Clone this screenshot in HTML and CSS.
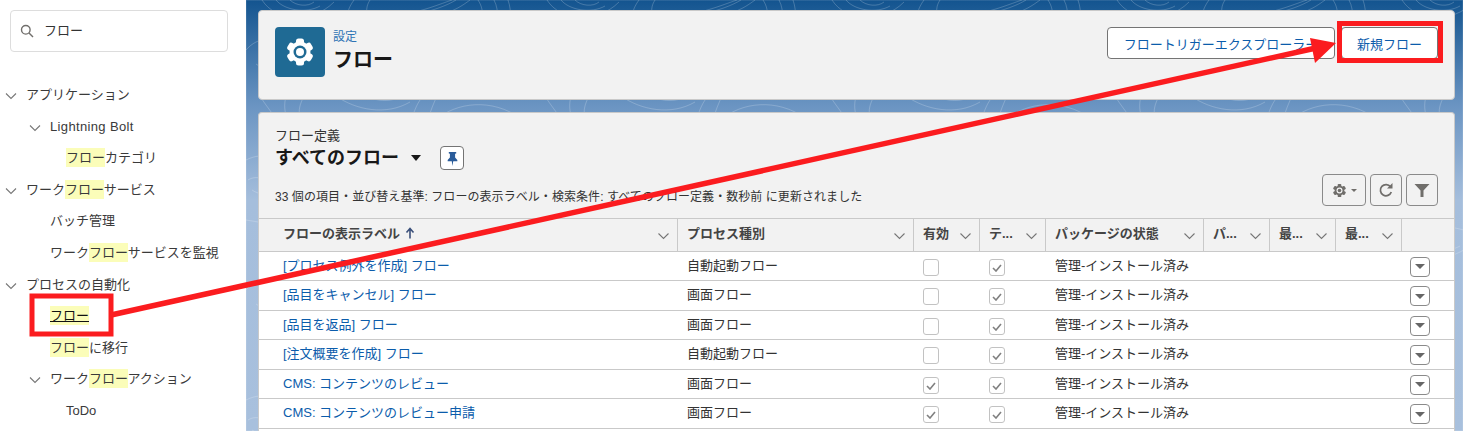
FILE: index.html
```html
<!DOCTYPE html>
<html lang="ja">
<head>
<meta charset="utf-8">
<title>フロー</title>
<link rel="stylesheet" href="styles.css">
</head>
<body>
<div class="page">
  <aside class="sidebar">
    <div class="search">
      <svg class="search-icon" viewBox="0 0 14 14"><circle cx="5.8" cy="5.8" r="4.3"/><path d="M9 9l4 4"/></svg>
      <span class="search-text">フロー</span>
    </div>
    <nav class="tree">
      <div class="node l0"><svg class="chev" viewBox="0 0 12 8"><path d="M1 1.5l5 5 5-5"/></svg>アプリケーション</div>
      <div class="node l1 latin"><svg class="chev" viewBox="0 0 12 8"><path d="M1 1.5l5 5 5-5"/></svg>Lightning Bolt</div>
      <div class="node l2"><mark>フロー</mark>カテゴリ</div>
      <div class="node l0"><svg class="chev" viewBox="0 0 12 8"><path d="M1 1.5l5 5 5-5"/></svg>ワーク<mark>フロー</mark>サービス</div>
      <div class="node l1 leaf">バッチ管理</div>
      <div class="node l1 leaf">ワーク<mark>フロー</mark>サービスを監視</div>
      <div class="node l0"><svg class="chev" viewBox="0 0 12 8"><path d="M1 1.5l5 5 5-5"/></svg>プロセスの自動化</div>
      <div class="node l1 leaf"><mark class="current">フロー</mark></div>
      <div class="node l1 leaf"><mark>フロー</mark>に移行</div>
      <div class="node l1"><svg class="chev" viewBox="0 0 12 8"><path d="M1 1.5l5 5 5-5"/></svg>ワーク<mark>フロー</mark>アクション</div>
      <div class="node l2">ToDo</div>
    </nav>
  </aside>
  <main class="content">
    <svg class="topo">
      <defs>
        <pattern id="contours" width="285" height="240" patternUnits="userSpaceOnUse">
          <path d="M30 0c8 10 30 14 44 6M44 0c6 6 18 7 24 2M16 0c14 22 50 24 72 2M108 0c-6 8-8 16-6 22M124 0c-4 6-4 12-2 18M160 14c20-4 34-10 46-14M172 14c16-4 28-8 38-14M196 14c12-3 20-8 28-14M232 0c4 6 5 12 4 18M248 0c3 6 4 12 3 18M262 0c2 6 3 12 2 18"/>
          <path d="M14 96c6 10 12 16 16 24M40 96c-2 8-2 16 2 24M58 96c-4 8-6 14-4 22M90 96c20 14 50 20 74 6M120 96c12 6 26 6 36 0M165 120c4-10 6-18 14-26M182 120c2-8 6-18 10-26M190 120c20-18 56-22 84-2M220 120c10-6 26-8 36-4"/>
          <path d="M0 50c12-14 30-14 34 0s-14 22-24 14M0 160c20-10 34 0 36 14s-16 26-30 16M2 180c10-6 20 0 20 10M250 40c12-8 28-4 30 8s-8 20-20 16M240 170c14-14 38-12 42 6s-16 24-30 16M262 176c6-2 10 2 10 6M0 220c30 6 60 2 90 14M100 60c20 10 40 8 60 0M90 190c24-10 60-10 80 4"/>
        </pattern>
      </defs>
      <rect width="100%" height="100%" fill="url(#contours)"/>
    </svg>
    <section class="panel head-panel">
      <div class="app-icon">
        <svg viewBox="0 0 50 50">
          <g class="gear-teeth">
            <rect x="21" y="11.500" width="8" height="27" rx="2.500"/>
            <rect x="21" y="11.500" width="8" height="27" rx="2.500" transform="rotate(60 25 25)"/>
            <rect x="21" y="11.500" width="8" height="27" rx="2.500" transform="rotate(120 25 25)"/>
          </g>
          <circle class="gear-body" cx="25" cy="25" r="10.500"/>
          <circle class="gear-hole" cx="25" cy="25" r="6.500"/>
          <circle class="gear-body" cx="25" cy="25" r="4"/>
        </svg>
      </div>
      <div class="head-text">
        <a class="crumb">設定</a>
        <h1>フロー</h1>
      </div>
      <div class="head-actions">
        <button class="btn wide">フロートリガーエクスプローラー</button>
        <button class="btn">新規フロー</button>
      </div>
    </section>
    <section class="panel list-panel">
      <div class="list-top">
        <div class="list-title">
          <div class="eyebrow">フロー定義</div>
          <div class="view-row">
            <h2>すべてのフロー</h2>
            <span class="caret"></span>
            <button class="pin">
              <svg viewBox="0 0 14 16"><path d="M3 1h8v1.500L9.800 3v4l2.400 2.500V11H1.800V9.500L4.200 7V3L3 2.500zM6.200 11h1.600L7 16z"/></svg>
            </button>
          </div>
          <div class="info">33 個の項目・並び替え基準: フローの表示ラベル・検索条件: すべてのフロー定義・数秒前 に更新されました</div>
        </div>
        <div class="tools">
          <button class="tool gear-tool">
            <svg class="tool-gear" viewBox="0 0 50 50">
              <rect x="19" y="3" width="12" height="44" rx="3"/>
              <rect x="19" y="3" width="12" height="44" rx="3" transform="rotate(60 25 25)"/>
              <rect x="19" y="3" width="12" height="44" rx="3" transform="rotate(120 25 25)"/>
              <circle cx="25" cy="25" r="16"/>
              <circle class="hole" cx="25" cy="25" r="10"/>
              <circle cx="25" cy="25" r="6"/>
            </svg>
            <span class="mini-caret"></span>
          </button>
          <button class="tool">
            <svg class="tool-icon" viewBox="0 0 16 16"><path class="ring" d="M12.500 4.800A5.600 5.600 0 1 0 13.300 10"/><path class="fill" d="M9 6.500h5.500V1z"/></svg>
          </button>
          <button class="tool">
            <svg class="tool-icon" viewBox="0 0 16 16"><path class="fill" d="M0.500 2h15L9.500 8.500V15h-3V8.500z"/></svg>
          </button>
        </div>
      </div>
      <div class="table">
        <div class="row header">
          <div class="cell first">フローの表示ラベル<svg class="sort" viewBox="0 0 10 12"><path d="M5 11.500V2.500M1.500 5.500L5 1.500l3.500 4"/></svg><svg class="chev" viewBox="0 0 12 8"><path d="M1 1.500l5 5 5-5"/></svg></div>
          <div class="cell">プロセス種別<svg class="chev" viewBox="0 0 12 8"><path d="M1 1.500l5 5 5-5"/></svg></div>
          <div class="cell">有効<svg class="chev" viewBox="0 0 12 8"><path d="M1 1.500l5 5 5-5"/></svg></div>
          <div class="cell">テ...<svg class="chev" viewBox="0 0 12 8"><path d="M1 1.500l5 5 5-5"/></svg></div>
          <div class="cell">パッケージの状態<svg class="chev" viewBox="0 0 12 8"><path d="M1 1.500l5 5 5-5"/></svg></div>
          <div class="cell">パ...<svg class="chev" viewBox="0 0 12 8"><path d="M1 1.500l5 5 5-5"/></svg></div>
          <div class="cell">最...<svg class="chev" viewBox="0 0 12 8"><path d="M1 1.500l5 5 5-5"/></svg></div>
          <div class="cell">最...<svg class="chev" viewBox="0 0 12 8"><path d="M1 1.500l5 5 5-5"/></svg></div>
          <div class="cell last"></div>
        </div>
        <div class="row">
          <div class="cell first"><a>[プロセス例外を作成] フロー</a></div><div class="cell">自動起動フロー</div>
          <div class="cell"><span class="check"></span></div>
          <div class="cell"><span class="check on"><svg viewBox="0 0 10 8"><path d="M1 4l3 3 5-6"/></svg></span></div>
          <div class="cell">管理-インストール済み</div><div class="cell"></div><div class="cell"></div><div class="cell"></div>
          <div class="cell last"><button class="row-btn"><span></span></button></div>
        </div>
        <div class="row">
          <div class="cell first"><a>[品目をキャンセル] フロー</a></div><div class="cell">画面フロー</div>
          <div class="cell"><span class="check"></span></div>
          <div class="cell"><span class="check on"><svg viewBox="0 0 10 8"><path d="M1 4l3 3 5-6"/></svg></span></div>
          <div class="cell">管理-インストール済み</div><div class="cell"></div><div class="cell"></div><div class="cell"></div>
          <div class="cell last"><button class="row-btn"><span></span></button></div>
        </div>
        <div class="row">
          <div class="cell first"><a>[品目を返品] フロー</a></div><div class="cell">画面フロー</div>
          <div class="cell"><span class="check"></span></div>
          <div class="cell"><span class="check on"><svg viewBox="0 0 10 8"><path d="M1 4l3 3 5-6"/></svg></span></div>
          <div class="cell">管理-インストール済み</div><div class="cell"></div><div class="cell"></div><div class="cell"></div>
          <div class="cell last"><button class="row-btn"><span></span></button></div>
        </div>
        <div class="row">
          <div class="cell first"><a>[注文概要を作成] フロー</a></div><div class="cell">自動起動フロー</div>
          <div class="cell"><span class="check"></span></div>
          <div class="cell"><span class="check on"><svg viewBox="0 0 10 8"><path d="M1 4l3 3 5-6"/></svg></span></div>
          <div class="cell">管理-インストール済み</div><div class="cell"></div><div class="cell"></div><div class="cell"></div>
          <div class="cell last"><button class="row-btn"><span></span></button></div>
        </div>
        <div class="row">
          <div class="cell first"><a>CMS: コンテンツのレビュー</a></div><div class="cell">画面フロー</div>
          <div class="cell"><span class="check on"><svg viewBox="0 0 10 8"><path d="M1 4l3 3 5-6"/></svg></span></div>
          <div class="cell"><span class="check on"><svg viewBox="0 0 10 8"><path d="M1 4l3 3 5-6"/></svg></span></div>
          <div class="cell">管理-インストール済み</div><div class="cell"></div><div class="cell"></div><div class="cell"></div>
          <div class="cell last"><button class="row-btn"><span></span></button></div>
        </div>
        <div class="row">
          <div class="cell first"><a>CMS: コンテンツのレビュー申請</a></div><div class="cell">画面フロー</div>
          <div class="cell"><span class="check on"><svg viewBox="0 0 10 8"><path d="M1 4l3 3 5-6"/></svg></span></div>
          <div class="cell"><span class="check on"><svg viewBox="0 0 10 8"><path d="M1 4l3 3 5-6"/></svg></span></div>
          <div class="cell">管理-インストール済み</div><div class="cell"></div><div class="cell"></div><div class="cell"></div>
          <div class="cell last"><button class="row-btn"><span></span></button></div>
        </div>
        <div class="row"></div>
      </div>
    </section>
  </main>
  <svg class="annotation" viewBox="0 0 1463 431">
    <rect x="32" y="296" width="79" height="38"/>
    <rect x="1339.500" y="23.500" width="101" height="37"/>
    <path class="shaft" d="M111 315L1316 48"/>
    <path class="head" d="M1336 43L1310 38L1315 63z"/>
  </svg>
</div>
</body>
</html>
```
FILE: styles.css
```css
* { box-sizing: border-box; }
html, body { margin: 0; padding: 0; height: 100%; }
body {
  font-family: "Liberation Sans", "Noto Sans CJK JP", sans-serif;
  font-size: 13px;
  color: #181818;
  overflow: hidden;
}
.page {
  position: relative;
  display: flex;
  width: 1463px;
  height: 431px;
  overflow: hidden;
}
.sidebar {
  flex: 0 0 246px;
  background: #fff;
  padding: 10px 18px 0 10px;
}
.search {
  display: flex;
  align-items: center;
  gap: 10px;
  height: 42px;
  padding-left: 9px;
  border: 1px solid #dddddd;
  border-radius: 4px;
  font-size: 13px;
}
.search-icon { width: 14px; height: 14px; fill: none; stroke: #706e6b; stroke-width: 1.4; }
.search-text { margin-top: -4px; color: #333; }
.tree { margin: 27px -18px 0 -10px; }
.node {
  position: relative;
  height: 31.6px;
  line-height: 31.6px;
  white-space: nowrap;
  color: #3a3a3a;
}
.node .chev { position: absolute; top: 13px; width: 12px; height: 8px; }
.l0 { padding-left: 26px; }
.l0 .chev { left: 5px; }
.l1 { padding-left: 50px; }
.l1 .chev { left: 29px; }
.l2 { padding-left: 66px; }
.latin { letter-spacing: .35px; }
mark { background: #fbfdb9; color: inherit; padding: 2px 0; }
.current { text-decoration: underline; color: #111; }
.chev { fill: none; stroke: #777; stroke-width: 1.1; }

.content {
  position: relative;
  flex: 1;
  min-width: 0;
  padding: 10px 8px 0 12px;
  background: linear-gradient(180deg, #13548f 0, #6a94c2 105px, #a5bedc 200px, #a8c0dd 431px);
}
.topo { position: absolute; inset: 0; width: 100%; height: 100%; fill: none; stroke: rgba(255,255,255,.2); stroke-width: 1; }
.panel {
  position: relative;
  background: #f2f2f2;
  border: 1px solid #c9c9c9;
  border-radius: 4px;
}
.head-panel {
  display: flex;
  align-items: flex-start;
  height: 90px;
  padding: 16px 16px 0;
  margin-bottom: 12px;
}
.app-icon { width: 50px; height: 50px; border-radius: 4px; background: #1f6a94; flex: none; }
.app-icon svg { display: block; width: 50px; height: 50px; }
.gear-teeth, .gear-body { fill: #fff; }
.gear-hole { fill: #1f6a94; }
.head-text { margin-left: 8px; padding-top: 2px; flex: 1; }
.crumb { display: block; font-size: 12px; line-height: 16px; color: #2e74b5; }
h1 { margin: 2px 0 0; font-size: 20px; line-height: 26px; font-weight: 700; color: #181818; }
.head-actions { display: flex; gap: 6px; }
.btn {
  height: 32px;
  width: 97px;
  padding: 0;
  border: 1px solid #747474;
  border-radius: 4px;
  background: #fff;
  color: #0b5cab;
  font: inherit;
  font-size: 13px;
}
.btn.wide { width: 228px; }
.list-panel { height: 330px; padding-top: 14px; border-bottom: 0; overflow: hidden; }
.list-top { display: flex; justify-content: space-between; height: 91px; padding: 0 16px; }
.eyebrow { line-height: 18px; color: #333; }
.view-row { display: flex; align-items: center; height: 24px; margin-top: 1px; }
h2 { margin: 0; font-size: 18px; line-height: 24px; font-weight: 700; }
.caret { margin: 0 19px 0 12px; border: 5px solid transparent; border-top: 6px solid #181818; border-bottom: 0; }
.pin { width: 24px; height: 24px; padding: 0; border: 1px solid #747474; border-radius: 4px; background: #fff; }
.pin svg { display: block; width: 13px; height: 15px; margin: auto; fill: #2a5c9a; }
.info { margin-top: 18px; font-size: 12px; line-height: 18px; color: #333; white-space: nowrap; letter-spacing: .06px; }
.tools { display: flex; gap: 4px; margin-top: 47px; height: 32px; }
.tool { width: 32px; height: 32px; padding: 0; border: 1px solid #8a8a8a; border-radius: 4px; background: #f2f2f2; display: flex; align-items: center; justify-content: center; }
.gear-tool { width: 44px; gap: 4px; }
.tool-gear { width: 15px; height: 15px; fill: #706e6b; }
.tool-gear .hole { fill: #f2f2f2; }
.mini-caret { border: 3px solid transparent; border-top: 3px solid #706e6b; border-bottom: 0; }
.tool-icon { width: 16px; height: 16px; }
.tool-icon .ring { fill: none; stroke: #706e6b; stroke-width: 1.7; }
.tool-icon .fill { fill: #706e6b; }

.table { display: block; }
.row {
  display: grid;
  grid-template-columns: 419px 236px 66px 66px 158px 66px 66px 66px 1fr;
  height: 29.5px;
  background: #fff;
  border-bottom: 1px solid #c9c9c9;
  line-height: 28.5px;
  white-space: nowrap;
  color: #333;
}
.row:last-child { height: 10px; border-bottom: 0; }
.row.header {
  height: 33.5px;
  background: #f2f2f2;
  border-top: 1px solid #c9c9c9;
  font-weight: 700;
  color: #444;
  line-height: 29px;
}
.cell { position: relative; padding-left: 9px; min-width: 0; overflow: hidden; }
.cell.first { padding-left: 24px; }
.cell.last { padding-left: 8px; }
.header .cell { border-right: 1px solid #c9c9c9; }
.header .cell.last { border-right: 0; }
.header .chev { position: absolute; right: 7px; top: 13px; width: 13px; height: 8px; }
.sort { width: 10px; height: 12px; margin-left: 5px; vertical-align: -1px; fill: none; stroke: #3a4f7a; stroke-width: 1.6; }
.row a { color: #0b5cab; }
.check {
  display: block;
  width: 16px;
  height: 17px;
  margin-top: 7px;
  border: 1px solid #c2c2c2;
  border-radius: 3px;
  background: #fff;
}
.check svg { display: block; width: 10px; height: 8px; margin: 4px 0 0 2px; fill: none; stroke: #808080; stroke-width: 1.6; }
.row-btn {
  display: flex;
  align-items: center;
  justify-content: center;
  width: 20px;
  height: 20px;
  margin-top: 5px;
  padding: 0;
  border: 1px solid #8a8a8a;
  border-radius: 4px;
  background: #fff;
}
.row-btn span { border: 5px solid transparent; border-top: 5px solid #666; border-bottom: 0; }
.annotation { position: absolute; inset: 0; width: 1463px; height: 431px; pointer-events: none; }
.annotation rect { fill: none; stroke: #fb1c1f; stroke-width: 5; }
.annotation .shaft { fill: none; stroke: #fb1c1f; stroke-width: 5.500; }
.annotation .head { fill: #fb1c1f; }
```
